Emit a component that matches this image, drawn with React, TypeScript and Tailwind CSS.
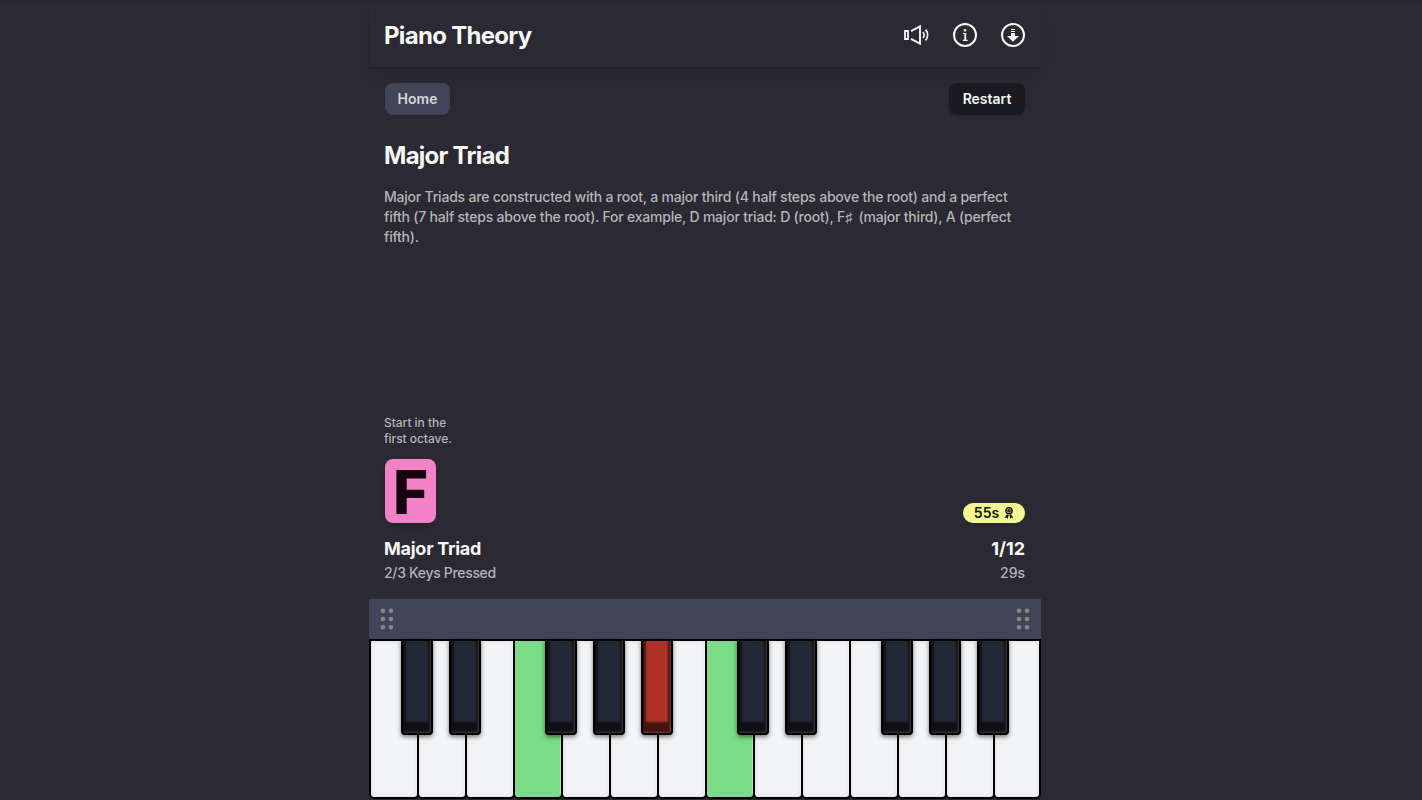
import React from "react";

type Tone = "plain" | "hit" | "miss";
type Key = { note: string; tone: Tone; sharp?: Tone };

const KEYS: Key[] = [
  { note: "C1", tone: "plain", sharp: "plain" },
  { note: "D1", tone: "plain", sharp: "plain" },
  { note: "E1", tone: "plain" },
  { note: "F1", tone: "hit", sharp: "plain" },
  { note: "G1", tone: "plain", sharp: "plain" },
  { note: "A1", tone: "plain", sharp: "miss" },
  { note: "B1", tone: "plain" },
  { note: "C2", tone: "hit", sharp: "plain" },
  { note: "D2", tone: "plain", sharp: "plain" },
  { note: "E2", tone: "plain" },
  { note: "F2", tone: "plain", sharp: "plain" },
  { note: "G2", tone: "plain", sharp: "plain" },
  { note: "A2", tone: "plain", sharp: "plain" },
  { note: "B2", tone: "plain" },
];

const WHITE: Record<Tone, string> = {
  plain: "bg-[#f3f4f6]",
  hit: "bg-[#7adc87]",
  miss: "bg-[#ab3025]",
};
const BLACK: Record<Tone, string> = {
  plain: "bg-[#232a37]",
  hit: "bg-[#7adc87]",
  miss: "bg-[#ae3226]",
};

function SpeakerIcon() {
  return (
    <svg width="26" height="24" viewBox="0 0 26 24" fill="none" stroke="currentColor">
      <path d="M2 8h3v8H2z" strokeWidth="1.8" />
      <path d="M8 8.2 17 3.4v17.2l-9-4.8" strokeWidth="1.9" />
      <path d="M20 9c1.3 1.7 1.3 4.3 0 6" strokeWidth="1.6" />
      <path d="M22.6 6.6c2.7 3.1 2.7 7.7 0 10.8" strokeWidth="1.7" />
    </svg>
  );
}

function InfoIcon() {
  return (
    <svg width="24" height="24" viewBox="0 0 24 24" fill="currentColor">
      <circle cx="12" cy="12" r="11" fill="none" stroke="currentColor" strokeWidth="2" />
      <circle cx="12" cy="7.2" r="1.25" />
      <path d="M9.9 9.9h3.3v6.9h1.4v1.2H9.9v-1.2h1.4v-5.7H9.9z" />
    </svg>
  );
}

function DownloadIcon() {
  return (
    <svg width="24" height="24" viewBox="0 0 24 24" fill="currentColor">
      <circle cx="12" cy="12" r="11" fill="none" stroke="currentColor" strokeWidth="2" />
      <path d="M10 6h4v1h-4zM10 8h4v1h-4zM10 10h4v3h4L12 18.8 6 13h4z" />
    </svg>
  );
}

function AwardIcon() {
  return (
    <svg width="10" height="12" viewBox="0 0 10 12" fill="currentColor">
      <circle cx="5" cy="3.7" r="3.1" fill="none" stroke="currentColor" strokeWidth="1.4" />
      <circle cx="5" cy="3.7" r="1.9" fillOpacity="0.85" />
      <path d="M3 7.2 4.7 8 3.7 11.8 2.5 10.7.7 11zM7 7.2 5.3 8l1 3.8 1.2-1.1 1.8.3z" />
    </svg>
  );
}

function Grip() {
  return (
    <svg width="14" height="24" viewBox="0 0 14 24" fill="#878787">
      {[3.8, 12, 20.2].map((y) => (
        <React.Fragment key={y}>
          <circle cx="3" cy={y} r="2.3" />
          <circle cx="11" cy={y} r="2.3" />
        </React.Fragment>
      ))}
    </svg>
  );
}

function Piano() {
  return (
    <div className="flex h-40">
      {KEYS.map((k, i) => (
        <div key={k.note} className={`relative h-40 ${i === KEYS.length - 1 ? "w-12" : "-mr-0.5 w-[50px]"}`}>
          <div
            className={`h-40 rounded-b-[5px] border-2 border-black shadow-[inset_-1px_0_0_rgba(255,255,255,0.3),inset_0_0_4px_rgba(190,190,190,0.5)] ${WHITE[k.tone]}`}
          />
          {k.sharp && (
            <div
              className={`absolute top-0 left-8 z-10 h-24 w-8 rounded-b-[4px] border-2 border-black shadow-[inset_-1px_-1px_2px_rgba(255,255,255,0.2),inset_0_-8px_2px_3px_rgba(0,0,0,0.6),0_2px_4px_rgba(0,0,0,0.5)] ${BLACK[k.sharp]}`}
            />
          )}
        </div>
      ))}
    </div>
  );
}

export default function App() {
  return (
    <div className="h-[800px] overflow-hidden border-t-[3px] border-[#232b2b] bg-[#2a2934] font-['Inter','Liberation_Sans',sans-serif] text-[#f8f8f2] antialiased">
      <div className="ml-[369px] flex h-[796px] w-[672px] flex-col">
        <header className="flex h-16 shrink-0 items-center justify-between px-4 shadow-[0_10px_15px_-3px_rgba(0,0,0,0.08),0_1px_1px_rgba(0,0,0,0.2)]">
          <h1 className="-ml-px pt-0.5 text-2xl font-bold tracking-[-0.7px]">Piano Theory</h1>
          <div className="flex items-center gap-6">
            <SpeakerIcon />
            <InfoIcon />
            <DownloadIcon />
          </div>
        </header>

        <div className="flex flex-1 flex-col justify-between px-4 pt-4 pb-4">
          <section>
            <div className="flex justify-between text-sm font-semibold">
              <button className="h-8 w-[65px] rounded-lg bg-[#424558] text-[#d6d7db] shadow-sm">Home</button>
              <button className="h-8 w-[76px] rounded-lg bg-[#191b21] shadow-sm">Restart</button>
            </div>
            <h2 className="mt-[25px] -ml-px text-2xl leading-8 font-bold tracking-[-0.73px]">Major Triad</h2>
            <p className="mt-[15px] -ml-px text-sm leading-5 font-[450] tracking-[-0.21px] whitespace-nowrap text-[#b5b5b4]">
              Major Triads are constructed with a root, a major third (4 half steps above the root) and a perfect
              <br />
              fifth (7 half steps above the root). For example, D major triad: D (root), F
              <span className="mr-px inline-block w-[9px] font-bold">♯</span> (major third), A (perfect
              <br />
              fifth).
            </p>
          </section>

          <section className="flex items-end justify-between">
            <div>
              <p className="-ml-px text-xs leading-4 font-[450] tracking-[-0.04px] text-[#b5b5b4]">
                Start in the
                <br />
                first octave.
              </p>
              <div className="mt-3 flex h-16 w-[51px] items-center justify-center rounded-lg bg-[#f082c5] pt-px text-[60px] leading-none font-extrabold text-[#16030f] shadow-md">
                F
              </div>
              <h3 className="mt-3 -ml-px text-lg leading-7 font-bold tracking-[-0.25px]">Major Triad</h3>
              <p className="-ml-px text-sm leading-5 font-[450] tracking-[-0.32px] text-[#b5b5b4]">2/3 Keys Pressed</p>
            </div>
            <div className="flex flex-col items-end">
              <div className="flex h-5 w-[62px] items-center justify-center gap-[5px] rounded-full bg-[#f2f990] text-sm font-semibold text-[#141507]">
                <span>55s</span>
                <AwardIcon />
              </div>
              <p className="mt-3 text-lg leading-7 font-bold">1/12</p>
              <p className="text-sm leading-5 font-[450] text-[#b5b5b4]">29s</p>
            </div>
          </section>
        </div>

        <div className="flex h-10 shrink-0 items-center justify-between bg-[#424558] px-[11px]">
          <Grip />
          <Grip />
        </div>
        <Piano />
      </div>
    </div>
  );
}
